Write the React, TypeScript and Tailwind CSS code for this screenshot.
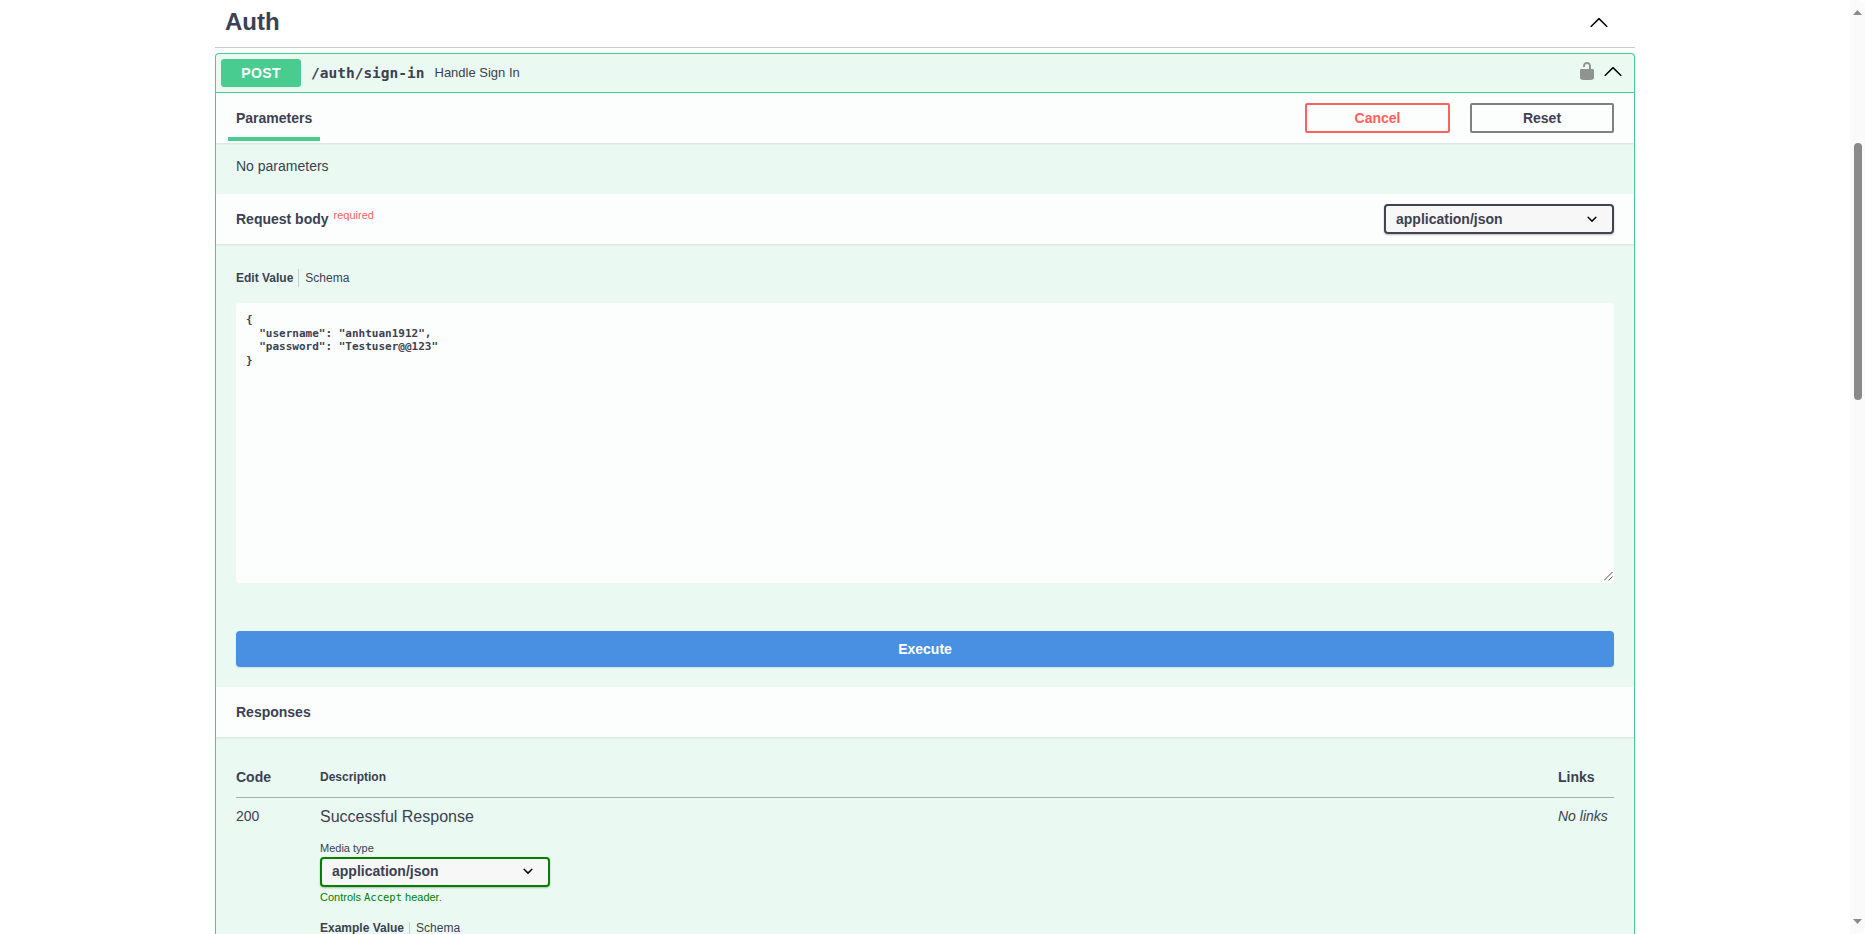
import React from "react";

const Chevron = ({ className }: { className?: string }) => (
  <svg viewBox="0 0 20 20" className={className} fill="currentColor">
    <path d="M 17.418 14.908 C 17.69 15.176 18.127 15.176 18.397 14.908 C 18.667 14.64 18.668 14.207 18.397 13.939 L 10.489 6.109 C 10.219 5.841 9.782 5.841 9.51 6.109 L 1.602 13.939 C 1.332 14.207 1.332 14.64 1.602 14.908 C 1.873 15.176 2.311 15.176 2.581 14.908 L 10 7.818 L 17.418 14.908 Z" />
  </svg>
);

const SmallChevron = () => (
  <svg viewBox="0 0 20 20" className="h-5 w-5" fill="#000">
    <path d="M13.418 7.859a.695.695 0 01.978 0 .68.68 0 010 .969l-3.908 3.83a.697.697 0 01-.979 0l-3.908-3.83a.68.68 0 010-.969.695.695 0 01.978 0L10 11l3.418-3.141z" />
  </svg>
);

const Lock = () => (
  <svg viewBox="0 0 20 20" className="h-5 w-5" fill="#8f9490">
    <path d="M15.8 8H14V5.6C14 2.703 12.665 1 10 1 7.334 1 6 2.703 6 5.6V6h2v-.801C8 3.754 8.797 3 10 3c1.203 0 2 .754 2 2.199V8H4c-.553 0-1 .646-1 1.199V17c0 .549.428 1.139.951 1.307l1.197.387C5.672 18.861 6.45 19 7 19h6c.55 0 1.328-.139 1.852-.307l1.197-.387c.524-.167.951-.757.951-1.306V9.199C17 8.646 16.352 8 15.8 8z" />
  </svg>
);

const Triangle = ({ up }: { up?: boolean }) => (
  <svg viewBox="0 0 9 5" className="h-[5px] w-[9px] shrink-0" fill="#8a8a8a">
    <path d={up ? "M4.5 0L9 5H0z" : "M0 0h9L4.5 5z"} />
  </svg>
);

const Resize = () => (
  <svg viewBox="0 0 9 9" className="absolute bottom-[2px] right-[1px] h-[9px] w-[9px]" stroke="#555" strokeWidth="1" fill="none">
    <path d="M0 8.5L8.5 0M4.5 8.5L8.5 4.5" />
  </svg>
);

const SectionBar = ({ children, right }: { children: React.ReactNode; right?: React.ReactNode }) => (
  <div className="flex h-[50px] items-center justify-between bg-[#fcfefd] px-5 shadow-[0_1px_2px_rgba(0,0,0,0.1)]">
    <div className="flex items-center">{children}</div>
    {right}
  </div>
);

export default function App() {
  return (
    <div className="flex h-[934px] w-[1865px] overflow-hidden bg-white text-[#3b4151] [font-family:'Liberation_Sans',Arial,sans-serif]">
      <main className="flex-1 overflow-hidden pl-[215px] pr-[215px]">
        <div className="flex h-[48px] items-center justify-between border-b border-[#c9cbcd] pb-[4px] pl-[10px] pr-[26px]">
          <h3 className="text-[24px] font-bold">Auth</h3>
          <Chevron className="h-5 w-5 text-black" />
        </div>

        <div className="mt-[5px] rounded-t-[4px] border border-b-0 border-[#49cc90] bg-[#eafaf3]">
          <div className="flex h-[39px] items-center border-b border-[#49cc90] pl-[5px] pr-[11px]">
            <span className="flex h-[28px] w-[80px] items-center justify-center rounded-[3px] bg-[#49cc90] text-[14px] font-bold tracking-[0.4px] text-white">
              POST
            </span>
            <span className="relative top-[1px] ml-[10px] text-[14.5px] font-bold [font-family:'DejaVu_Sans_Mono',monospace]">/auth/sign-in</span>
            <span className="ml-[10px] text-[13px]">Handle Sign In</span>
            <span className="ml-auto flex items-center gap-[6px] pb-[4px]">
              <Lock />
              <Chevron className="h-5 w-5 text-black" />
            </span>
          </div>

          <SectionBar
            right={
              <div className="flex gap-[20px]">
                <button className="h-[30px] w-[145px] rounded-[2px] border-2 border-[#ff6060] text-[14px] font-bold text-[#ff6060]">Cancel</button>
                <button className="h-[30px] w-[144px] rounded-[2px] border-2 border-[#808080] text-[14px] font-bold">Reset</button>
              </div>
            }
          >
            <div className="relative flex h-[50px] items-center">
              <span className="text-[14px] font-bold">Parameters</span>
              <span className="absolute bottom-[2px] left-[-8px] h-[4px] w-[92px] bg-[#49cc90]" />
            </div>
          </SectionBar>

          <div className="h-[51px] px-5 pt-[15px] text-[14px] leading-[16px]">No parameters</div>

          <SectionBar
            right={
              <div className="flex h-[30px] w-[230px] items-center justify-between rounded-[4px] border-2 border-[#41444e] bg-[#f7f7f7] pl-[10px] pr-[10px] text-[14px] font-bold shadow-[0_1px_2px_rgba(0,0,0,0.25)]">
                application/json
                <SmallChevron />
              </div>
            }
          >
            <span className="text-[14px] font-bold">Request body</span>
            <span className="relative top-[-4px] ml-[5px] text-[11px] text-[#ff6060]">required</span>
          </SectionBar>

          <div className="px-5 pt-[25px]">
            <div className="flex items-center text-[12px]">
              <span className="border-r border-[#c9cbcd] pr-[5px] font-bold">Edit Value</span>
              <span className="pl-[6px]">Schema</span>
            </div>
            <div className="relative mt-[16px] h-[280px] rounded-[4px] bg-[#fcfefd] px-[10px] pt-[10px] text-[11px] font-bold leading-[13.5px] [font-family:'DejaVu_Sans_Mono',monospace]">
              <pre className="[font-family:inherit]">{`{
  "username": "anhtuan1912",
  "password": "Testuser@@123"
}`}</pre>
              <Resize />
            </div>
            <button className="mt-[48px] h-[36px] w-full rounded-[4px] bg-[#4990e2] text-[14px] font-bold text-white shadow-[0_1px_2px_rgba(0,0,0,0.1)]">Execute</button>
          </div>

          <div className="mt-[20px]">
            <SectionBar>
              <span className="text-[14px] font-bold">Responses</span>
            </SectionBar>
          </div>

          <div className="px-5 pt-[22px]">
            <div className="flex h-[39px] items-center border-b border-[#a5aeae] pb-[2px] text-[12px] font-bold">
              <span className="w-[84px] text-[14px]">Code</span>
              <span className="flex-1">Description</span>
              <span className="w-[56px] text-[14px]">Links</span>
            </div>
            <div className="flex pt-[10px]">
              <span className="w-[84px] text-[14px] leading-[16px]">200</span>
              <div className="flex-1">
                <div className="text-[16px] leading-[18px]">Successful Response</div>
                <div className="mt-[16px] text-[11px] leading-[12px]">Media type</div>
                <div className="mt-[3px] flex h-[30px] w-[230px] items-center justify-between rounded-[4px] border-2 border-[#008000] bg-[#f7f7f7] pb-[2px] pl-[10px] pr-[10px] text-[14px] font-bold shadow-[0_1px_2px_rgba(0,0,0,0.25)]">
                  application/json
                  <SmallChevron />
                </div>
                <div className="mt-[4px] text-[11px] leading-[12px] text-[#008000]">
                  Controls <span className="text-[10.5px] [font-family:'DejaVu_Sans_Mono',monospace]">Accept</span> header.
                </div>
                <div className="mt-[19px] flex items-center text-[12px] leading-[12px]">
                  <span className="border-r border-[#c9cbcd] pr-[5px] font-bold">Example Value</span>
                  <span className="pl-[6px]">Schema</span>
                </div>
              </div>
              <span className="w-[56px] text-[14px] italic leading-[16px]">No links</span>
            </div>
          </div>
        </div>
      </main>

      <aside className="flex w-[15px] flex-col items-center rounded-r-[8px] bg-[#fafafa] py-[10px]">
        <Triangle up />
        <div className="mt-[128px] h-[257px] w-[8px] shrink-0 rounded-[4px] bg-[#8a8a8a]" />
        <div className="mt-auto">
          <Triangle />
        </div>
      </aside>
    </div>
  );
}
